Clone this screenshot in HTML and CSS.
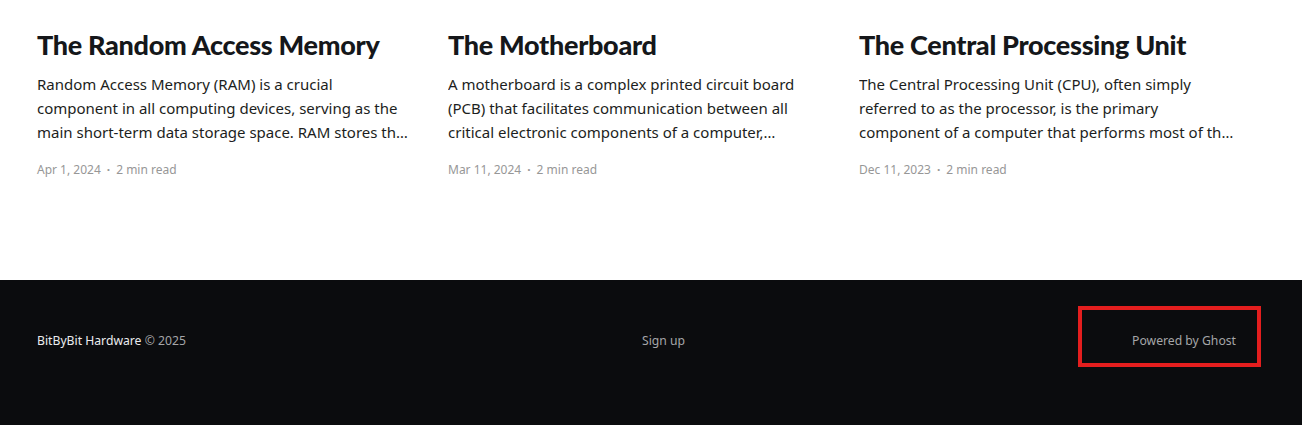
FILE: index.html
```html
<!DOCTYPE html>
<html lang="en">
<head>
<meta charset="utf-8">
<title>BitByBit Hardware</title>
<link rel="stylesheet" href="styles.css">
</head>
<body>
<main class="feed">
  <article class="card">
    <h2 class="card-title">The Random Access Memory</h2>
    <p class="card-excerpt">Random Access Memory (RAM) is a crucial component in all computing devices, serving as the main short-term data storage space. RAM stores the data that the computer is currently using.</p>
    <div class="card-meta"><span>Apr 1, 2024</span><span class="dot">·</span><span>2 min read</span></div>
  </article>
  <article class="card">
    <h2 class="card-title">The Motherboard</h2>
    <p class="card-excerpt">A motherboard is a complex printed circuit board (PCB) that facilitates communication between all critical electronic components of a computer, including the CPU and memory.</p>
    <div class="card-meta"><span>Mar 11, 2024</span><span class="dot">·</span><span>2 min read</span></div>
  </article>
  <article class="card">
    <h2 class="card-title">The Central Processing Unit</h2>
    <p class="card-excerpt">The Central Processing Unit (CPU), often simply referred to as the processor, is the primary component of a computer that performs most of the processing.</p>
    <div class="card-meta"><span>Dec 11, 2023</span><span class="dot">·</span><span>2 min read</span></div>
  </article>
</main>
<footer class="site-footer">
  <div class="footer-inner">
    <div class="copyright"><a class="brand">BitByBit Hardware</a> © 2025</div>
    <nav class="footer-nav"><a>Sign up</a></nav>
    <div class="powered"><a class="powered-link">Powered by Ghost</a></div>
  </div>
</footer>
</body>
</html>
```
FILE: styles.css
```css
* { box-sizing: border-box; }
html, body { margin: 0; padding: 0; }
body {
  background: #ffffff;
  font-family: "Noto Sans", "DejaVu Sans", sans-serif;
  color: #15171a;
}
.feed {
  display: grid;
  grid-template-columns: repeat(3, 379px);
  column-gap: 32px;
  padding: 24px 0 0 37px;
  height: 280px;
}
.card-title {
  margin: 0;
  font-family: "Lato", "Noto Sans", sans-serif;
  font-size: 27px;
  line-height: 42px;
  font-weight: 900;
  letter-spacing: -0.3px;
  color: #15171a;
  white-space: nowrap;
}
.card-excerpt {
  margin: 6px 0 0;
  font-size: 15px;
  line-height: 24px;
  color: #1c1e21;
  display: -webkit-box;
  -webkit-line-clamp: 3;
  -webkit-box-orient: vertical;
  overflow: hidden;
}
.card-meta {
  margin-top: 16px;
  font-size: 12px;
  line-height: 20px;
  color: #979797;
  display: flex;
  gap: 6px;
}
.dot { font-weight: 700; }
.site-footer {
  background: #0b0c0e;
  height: 145px;
  padding-top: 52px;
}
.footer-inner {
  width: 100%;
  display: grid;
  grid-template-columns: 605px auto 1fr;
  align-items: start;
  padding-left: 37px;
  padding-right: 41px;
  font-size: 12.2px;
  line-height: 18px;
  color: #a5a6a8;
}
.brand { color: #ececee; }
.footer-nav { text-align: center; }
.footer-nav a { color: #a5a6a8; }
.powered { display: flex; justify-content: flex-end; }
.powered-link {
  display: block;
  width: 183px;
  height: 61px;
  margin-top: -26px;
  border: 4px solid #e41e1e;
  padding: 22px 21px 13px 0;
  text-align: right;
  color: #a5a6a8;
}
```
